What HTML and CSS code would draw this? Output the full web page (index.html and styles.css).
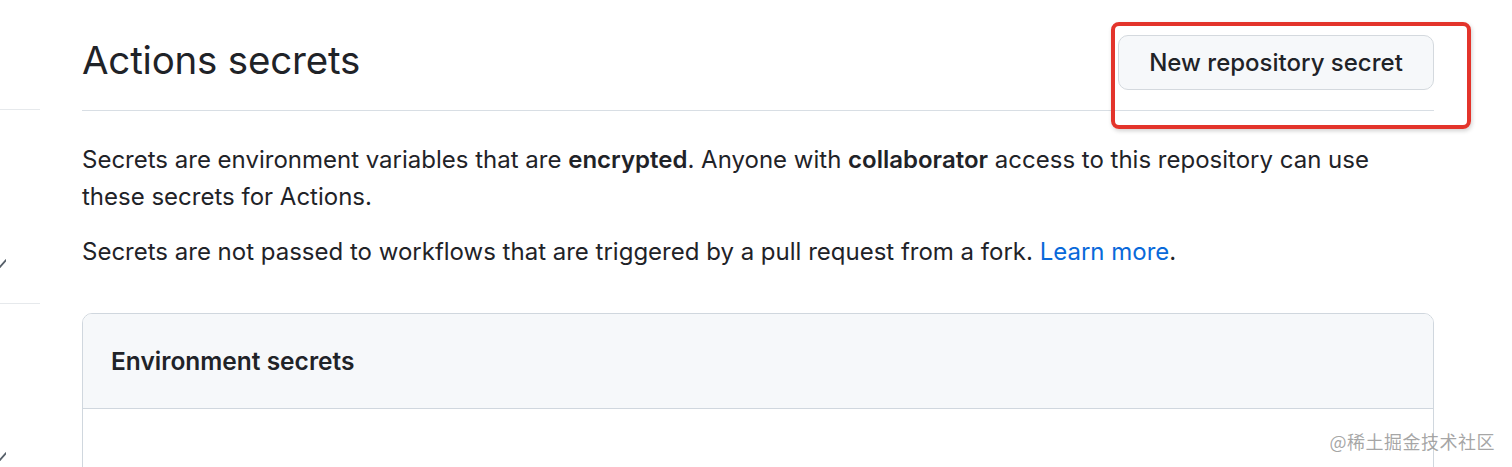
FILE: index.html
```html
<!DOCTYPE html>
<html lang="en">
<head>
<meta charset="utf-8">
<title>Actions secrets</title>
<link rel="stylesheet" href="styles.css">
</head>
<body>
<div class="layout">
  <nav class="sidebar">
    <div class="side-item side-top"></div>
    <div class="side-item side-mid">
      <svg class="chev" width="12" height="10" viewBox="0 0 12 10"><polyline points="0,1 6,8 12,1" fill="none" stroke="#57606a" stroke-width="1.8" stroke-linecap="round" stroke-linejoin="round"/></svg>
    </div>
    <div class="side-item side-bottom">
      <svg class="chev" width="12" height="10" viewBox="0 0 12 10"><polyline points="0,1 6,8 12,1" fill="none" stroke="#57606a" stroke-width="1.8" stroke-linecap="round" stroke-linejoin="round"/></svg>
    </div>
  </nav>
  <main class="main">
    <div class="subhead">
      <h2 class="subhead-title">Actions secrets</h2>
      <button class="btn">New repository secret</button>
    </div>
    <p class="text first">Secrets are environment variables that are <strong>encrypted</strong>. Anyone with <strong>collaborator</strong> access to this repository can use these secrets for Actions.</p>
    <p class="text">Secrets are not passed to workflows that are triggered by a pull request from a fork. <a class="link" href="#">Learn more</a>.</p>
    <div class="box">
      <div class="box-header"><h3 class="box-title">Environment secrets</h3></div>
      <div class="box-body"></div>
    </div>
  </main>
</div>
<div class="annotation"></div>
<div class="watermark">@稀土掘金技术社区</div>
</body>
</html>
```

FILE: styles.css
```css
html, body {
  margin: 0;
  padding: 0;
  background: #ffffff;
  overflow: hidden;
}
body {
  width: 1512px;
  height: 467px;
  position: relative;
  font-family: Inter, "Liberation Sans", "Noto Sans CJK SC", sans-serif;
  color: #1f2328;
}
.layout {
  display: flex;
  gap: 42px;
  height: 467px;
  overflow: hidden;
}
.sidebar {
  width: 40px;
  flex: none;
  display: flex;
  flex-direction: column;
  overflow: hidden;
}
.side-item {
  border-bottom: 1.5px solid #e6e9ec;
}
.side-top { height: 109px; }
.side-mid { height: 193px; }
.side-bottom { height: 160px; border-bottom: none; }
.chev {
  display: block;
  margin-left: -6px;
}
.side-mid .chev { margin-top: 149px; }
.side-bottom .chev { margin-top: 148px; }

.main {
  width: 1352px;
  flex: none;
}
.subhead {
  display: flex;
  align-items: center;
  justify-content: space-between;
  padding-top: 35px;
  padding-bottom: 20px;
  border-bottom: 1.75px solid #d8dee4;
}
.subhead-title {
  margin: 0 0 5px;
  font-size: 38.5px;
  font-weight: 400;
  line-height: 48px;
  letter-spacing: -0.2px;
}
.btn {
  height: 55px;
  width: 316px;
  border: 1.75px solid #d4d9de;
  border-radius: 10px;
  background: #f6f8fa;
  font-family: inherit;
  font-size: 24px;
  font-weight: 500;
  color: #1f2328;
  padding: 0;
}
.text {
  margin: 18px 0 0;
  font-size: 24px;
  line-height: 37px;
}
.text.first { margin-top: 30px; }
.text strong { font-weight: 600; }
.link {
  color: #0969da;
  text-decoration: none;
}
.box {
  margin-top: 43px;
  border: 1.75px solid #d0d7de;
  border-radius: 10px;
  height: 220px;
  overflow: hidden;
}
.box-header {
  background: #f6f8fa;
  height: 95px;
  border-bottom: 1.75px solid #d0d7de;
  display: flex;
  align-items: center;
  padding-left: 28px;
  box-sizing: border-box;
}
.box-title {
  margin: 0;
  font-size: 24.5px;
  font-weight: 600;
}
.annotation {
  position: absolute;
  left: 1111px;
  top: 22px;
  width: 352px;
  height: 99px;
  border: 4px solid #e3342b;
  border-radius: 8px;
  box-shadow: 1px 2px 4px rgba(0,0,0,0.18);
}
.watermark {
  position: absolute;
  right: 17px;
  top: 428px;
  font-family: "Noto Sans CJK SC", sans-serif;
  font-size: 18px;
  color: rgba(150,150,150,0.85);
  letter-spacing: 0.5px;
}
```
